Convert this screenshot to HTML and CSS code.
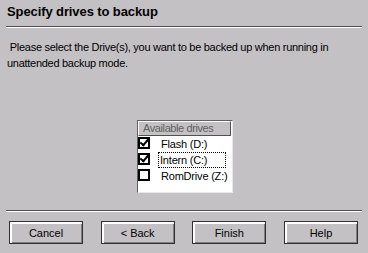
FILE: index.html
```html
<!DOCTYPE html>
<html lang="en">
<head>
    <meta charset="UTF-8">
    <title>Specify drives to backup</title>
    <link rel="stylesheet" href="styles.css">
</head>
<body>
    <div class="wizard">
        <h2 class="title">Specify drives to backup</h2>
        <div class="rule"></div>

        <p class="info">&nbsp;Please select the Drive(s), you want to be backed up when running in<br>unattended backup mode.</p>

        <div class="list-wrap">
            <div class="list">
                <div class="list-head">Available drives</div>
                <div class="row"><span class="check on"></span><span class="label">Flash (D:)</span></div>
                <div class="row"><span class="check on"></span><span class="label focus">Intern (C:)</span></div>
                <div class="row"><span class="check"></span><span class="label">RomDrive (Z:)</span></div>
            </div>
        </div>

        <div class="rule bottom"></div>

        <div class="buttons">
            <button class="btn">Cancel</button>
            <button class="btn">&lt; Back</button>
            <button class="btn">Finish</button>
            <button class="btn">Help</button>
        </div>
    </div>
</body>
</html>
```

FILE: styles.css
```css
body {
    margin: 0;
    background-color: #c4c1c4;
    font-family: "Liberation Sans", Arial, sans-serif;
    color: #000;
}

.wizard {
    width: 368px;
    height: 253px;
    padding: 0 6px;
    box-sizing: border-box;
    display: flex;
    flex-direction: column;
}

.title {
    font-size: 13px;
    font-weight: bold;
    letter-spacing: -0.1px;
    margin: 0;
    padding: 4px 0 0 1px;
    box-sizing: border-box;
    line-height: 16px;
    height: 26px;
}

.rule {
    height: 1px;
    background: #505050;
    border-bottom: 1px solid #fff;
}

.info {
    font-size: 11px;
    line-height: 16px;
    letter-spacing: -0.28px;
    margin: 11px 0 0 1px;
    white-space: nowrap;
}

.list-wrap {
    display: flex;
    justify-content: center;
    margin-top: 49px;
    padding-left: 2px;
}

.list {
    width: 94px;
    height: 71px;
    background: #fff;
    border-left: 1px solid #606060;
    border-top: 1px solid #606060;
    border-right: 1px solid #e8e8e8;
    border-bottom: 1px solid #e8e8e8;
}

.list-head {
    height: 13px;
    line-height: 13px;
    font-size: 11px;
    letter-spacing: -0.4px;
    color: #606060;
    background: #c4c1c4;
    border-top: 1px solid #fff;
    border-left: 1px solid #fff;
    border-right: 1px solid #505050;
    border-bottom: 1px solid #505050;
    padding-left: 4px;
    margin-right: 1px;
    white-space: nowrap;
    overflow: hidden;
}

.row {
    display: flex;
    align-items: flex-start;
    height: 16px;
    font-size: 11px;
    letter-spacing: -0.2px;
    white-space: nowrap;
}

.check {
    width: 8px;
    height: 8px;
    margin-top: 1px;
    border: 2px solid #000;
    position: relative;
    flex: none;
}

.check.on::after {
    content: "";
    position: absolute;
    left: 2px;
    top: -2px;
    width: 3px;
    height: 7px;
    border-right: 2px solid #000;
    border-bottom: 2px solid #000;
    transform: rotate(40deg);
}

.label {
    margin: 0 0 0 9px;
    padding: 1px 1px 0;
    line-height: 13px;
    border: 1px solid transparent;
}

.label.focus {
    border: 1px dotted #000;
    margin-left: 8px;
    width: 68px;
    box-sizing: border-box;
    padding-left: 1px;
}

.rule.bottom {
    margin-top: 17px;
}

.buttons {
    display: flex;
    justify-content: space-between;
    margin-top: 9px;
    padding: 0 4px 0 3px;
}

.btn {
    width: 74px;
    height: 23px;
    font-family: "Liberation Sans", Arial, sans-serif;
    font-size: 11px;
    background: #c4c1c4;
    border: 1px solid #303030;
    box-shadow: inset 2px 2px 0 #fff, inset -1px -1px 0 #808080;
    padding: 0;
    color: #000;
}
```
